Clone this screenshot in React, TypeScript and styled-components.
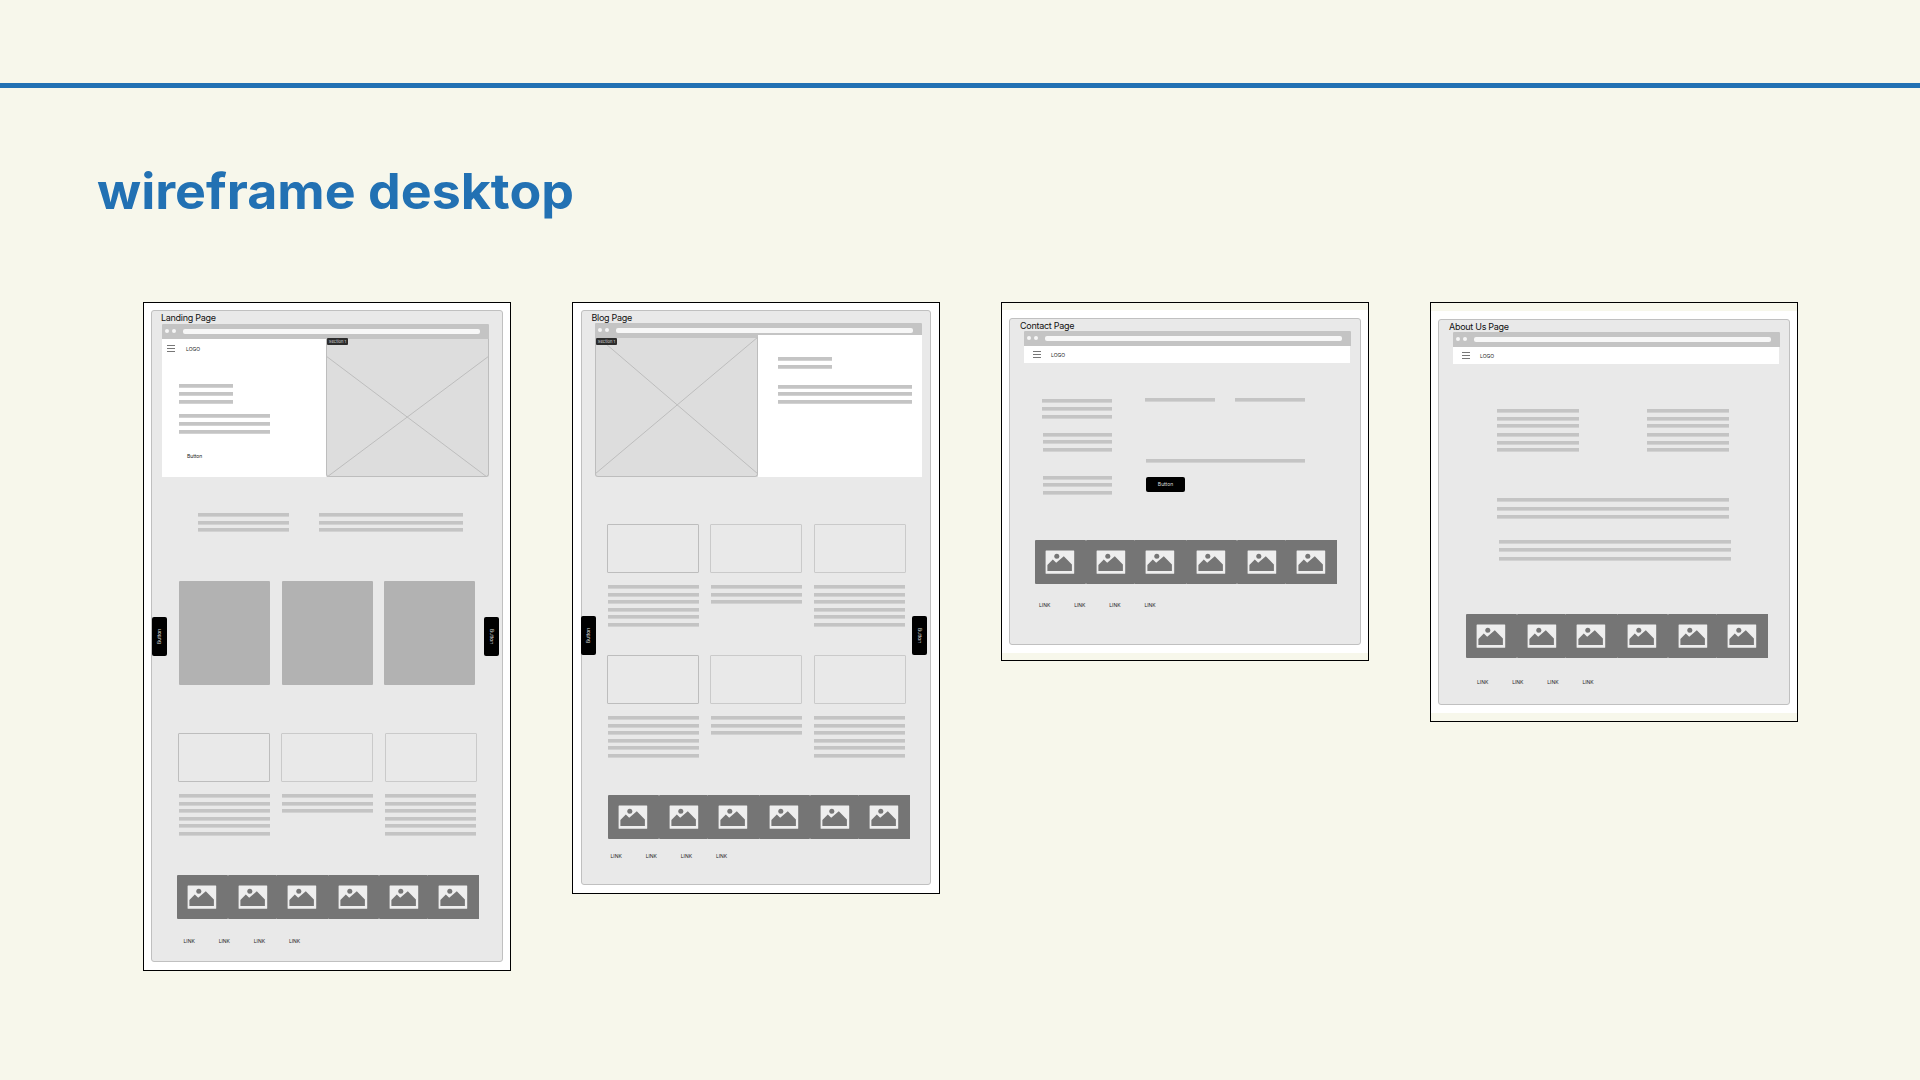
import React from "react";
import styled, { createGlobalStyle } from "styled-components";

const GlobalStyle = createGlobalStyle`
  * { box-sizing: border-box; }
  body { margin: 0; background: #f7f7eb; font-family: Inter, "Liberation Sans", sans-serif; }
`;

const Slide = styled.main`
  width: 1920px;
  height: 1080px;
  overflow: hidden;
  background: #f7f7eb;
`;

const TopRule = styled.div`
  height: 88px;
  border-bottom: 5px solid #2271b3;
`;

const Heading = styled.h1`
  margin: 73px 0 0 97px;
  width: max-content;
  height: 60px;
  font-size: 49px;
  line-height: 61px;
  font-weight: 700;
  color: #2271b3;
  white-space: nowrap;
  transform: scaleX(1.06);
  transform-origin: 0 50%;
`;

const Gallery = styled.section`
  display: flex;
  align-items: flex-start;
  gap: 61px;
  margin: 81px 0 0 143px;
`;

const Frame = styled.article<{ $h: number; $inset?: string }>`
  width: 368px;
  height: ${(p) => p.$h}px;
  border: 1px solid #000;
  padding: ${(p) => p.$inset ?? "0"};
`;

const Sheet = styled.div<{ $pad: string }>`
  height: 100%;
  background: #fff;
  padding: ${(p) => p.$pad};
`;

const Paper = styled.div`
  position: relative;
  height: 100%;
  background: #e9e9e9;
  border: 1px solid #c0c0c0;
  border-radius: 3px;
`;

const PageName = styled.div<{ $h: number; $x: number }>`
  height: ${(p) => p.$h}px;
  margin-left: ${(p) => p.$x}px;
  font-size: 9px;
  letter-spacing: -0.28px;
  line-height: 13px;
  color: #111;
  white-space: nowrap;
`;

const Chrome = styled.div<{ $x: number; $h?: number }>`
  display: flex;
  align-items: flex-start;
  width: 327px;
  height: ${(p) => p.$h ?? 15}px;
  margin-left: ${(p) => p.$x}px;
  padding: 5px 0 0 3px;
  background: #c4c4c4;
  border-radius: 1px 1px 0 0;
`;

const Dot = styled.i`
  width: 4px;
  height: 4px;
  margin-right: 3px;
  border-radius: 50%;
  background: #f6f6f6;
`;

const Address = styled.div`
  width: 297px;
  height: 5px;
  margin-left: 4px;
  border-radius: 2px;
  background: #f7f7f7;
`;

const Row = styled.div<{ $mt?: number; $x?: number; $gap?: number; $h?: number }>`
  display: flex;
  align-items: flex-start;
  gap: ${(p) => p.$gap ?? 0}px;
  margin: ${(p) => p.$mt ?? 0}px 0 0 ${(p) => p.$x ?? 0}px;
  height: ${(p) => (p.$h ? `${p.$h}px` : "auto")};
`;

const BarStack = styled.div<{ $w: number; $mt?: number; $x?: number; $gap?: number }>`
  display: flex;
  flex-direction: column;
  flex: none;
  gap: ${(p) => p.$gap ?? 3.6}px;
  width: ${(p) => p.$w}px;
  margin: ${(p) => p.$mt ?? 0}px 0 0 ${(p) => p.$x ?? 0}px;
`;

const Bar = styled.div`
  height: 4px;
  background: linear-gradient(#c4c4c4 75%, #d2d2d2 75%);
`;

const WhitePanel = styled.div<{ $w: number; $h: number }>`
  width: ${(p) => p.$w}px;
  height: ${(p) => p.$h}px;
  flex: none;
  background: #fff;
`;

const NavPanel = styled.div<{ $pad: string; $gap: number }>`
  display: flex;
  align-items: flex-start;
  gap: ${(p) => p.$gap}px;
  height: 14px;
  padding: ${(p) => p.$pad};
`;

const Burger = styled.div`
  display: flex;
  flex-direction: column;
  gap: 2px;
  width: 8px;
  > i { height: 1px; background: #777; }
`;

const Tiny = styled.span`
  font-size: 5px;
  line-height: 6px;
  color: #222;
  white-space: nowrap;
`;

const LogoText = styled(Tiny)`
  padding-top: 1px;
`;

const HeroButton = styled(Tiny)`
  display: block;
  margin: 19px 0 0 25px;
`;

const PhotoBox = styled.div<{ $w: number; $h: number }>`
  position: relative;
  flex: none;
  width: ${(p) => p.$w}px;
  height: ${(p) => p.$h}px;
  background: #ddd;
  border: 1px solid #bdbdbd;
  border-top: 0;
  border-radius: 0 0 3px 3px;
  > svg { position: absolute; left: -1px; top: 0; display: block; }
`;

const Badge = styled.span<{ $x: number; $y: number }>`
  position: absolute;
  left: ${(p) => p.$x}px;
  top: ${(p) => p.$y}px;
  width: 21px;
  height: 7px;
  border-radius: 1px;
  background: #2c2c2c;
  color: #d8d8d8;
  font-size: 4.1px;
  font-weight: 400;
  line-height: 7px;
  text-align: center;
  white-space: nowrap;
`;

const Square = styled.div`
  width: 91px;
  height: 104px;
  border-radius: 1px;
  background: #b2b2b2;
`;

const Outline = styled.div<{ $strong?: boolean }>`
  width: 92px;
  height: 49px;
  border: 1px solid ${(p) => (p.$strong ? "#bdbdbd" : "#cacaca")};
  border-radius: 1px;
`;

const SideButton = styled.button<{ $x: number; $y: number; $flip?: boolean }>`
  position: absolute;
  left: ${(p) => p.$x}px;
  top: ${(p) => p.$y}px;
  width: 15px;
  height: 39px;
  padding: 0;
  border: 0;
  border-radius: 2px;
  background: #000;
  color: #ddd;
  font: 5px/15px Inter, sans-serif;
  text-align: center;
  writing-mode: vertical-rl;
  transform: ${(p) => (p.$flip ? "rotate(180deg)" : "none")};
`;

const FlatButton = styled.button`
  display: block;
  width: 39px;
  height: 15px;
  margin: 14px 0 0 1px;
  padding: 0;
  border: 0;
  border-radius: 2px;
  background: #000;
  color: #ddd;
  font: 5px/15px Inter, sans-serif;
`;

const Strip = styled.div<{ $mt: number; $x: number }>`
  display: flex;
  width: 302px;
  height: 44px;
  margin: ${(p) => p.$mt}px 0 0 ${(p) => p.$x}px;
`;

const Tile = styled.div<{ $w: number; $join?: boolean }>`
  width: ${(p) => p.$w}px;
  height: 44px;
  padding: 10px 0 0 10px;
  background: #757575;
  border-radius: ${(p) => (p.$join ? "0" : "1px")};
  > svg { display: block; }
`;

const Links = styled.nav<{ $mt: number; $x: number }>`
  display: flex;
  margin: ${(p) => p.$mt}px 0 0 ${(p) => p.$x}px;
  > span { width: 35.15px; }
`;

const Column = styled.div<{ $w?: number }>`
  width: ${(p) => (p.$w ? `${p.$w}px` : "auto")};
  flex: none;
`;

function Bars({ n, ...rest }: { n: number; $w: number; $mt?: number; $x?: number; $gap?: number }) {
  return (
    <BarStack {...rest}>
      {Array.from({ length: n }, (_, i) => (
        <Bar key={i} />
      ))}
    </BarStack>
  );
}

function BrowserBar({ x, h }: { x: number; h?: number }) {
  return (
    <Chrome $x={x} $h={h}>
      <Dot />
      <Dot />
      <Address />
    </Chrome>
  );
}

function Nav({ pad, gap = 10 }: { pad: string; gap?: number }) {
  return (
    <NavPanel $pad={pad} $gap={gap}>
      <Burger>
        <i />
        <i />
        <i />
      </Burger>
      <LogoText>LOGO</LogoText>
    </NavPanel>
  );
}

function PictureStrip({ mt, x }: { mt: number; x: number }) {
  return (
    <Strip $mt={mt} $x={x}>
      {[51, 49, 51, 51, 49, 51].map((w, i) => (
        <Tile key={i} $w={w} $join={i === 2 || i === 5}>
          <svg width="30" height="25" viewBox="0 0 30 25">
            <rect x="0.6" y="0.5" width="28.6" height="23.3" rx="0.5" fill="#eee" />
            <circle cx="11.8" cy="6.3" r="2.5" fill="#757575" />
            <path d="M2.4 21V15l5.4-5.4 3.4 3.2 7.6-6.6 8.1 8.2V21z" fill="#757575" />
          </svg>
        </Tile>
      ))}
    </Strip>
  );
}

function FooterLinks({ mt, x }: { mt: number; x: number }) {
  return (
    <Links $mt={mt} $x={x}>
      {[0, 1, 2, 3].map((i) => (
        <Tiny key={i}>LINK</Tiny>
      ))}
    </Links>
  );
}

function Articles({ boxMt, boxX }: { boxMt: number; boxX: number }) {
  return (
    <>
      <Row $mt={boxMt} $x={boxX} $gap={11.4}>
        <Outline $strong />
        <Outline />
        <Outline />
      </Row>
      <Row $mt={12} $x={boxX + 1} $gap={12} $h={42}>
        <Bars n={6} $w={91} />
        <Bars n={3} $w={91} />
        <Bars n={6} $w={91} />
      </Row>
    </>
  );
}

function LandingPage() {
  return (
    <Frame $h={669}>
      <Sheet $pad="7px 7px 8px">
        <Paper>
          <PageName $h={13} $x={9}>Landing Page</PageName>
          <BrowserBar x={10} />
          <Row $x={10}>
            <WhitePanel $w={164} $h={138}>
              <Nav pad="6px 0 0 5px" gap={11} />
              <Bars n={3} $w={54} $x={17} $mt={31.4} />
              <Bars n={3} $w={91} $x={17} $mt={10.9} />
              <HeroButton>Button</HeroButton>
            </WhitePanel>
            <PhotoBox $w={163} $h={138}>
              <svg width="163" height="138">
                <path d="M0 17L161 138M163 17L1 138" stroke="#bdbdbd" fill="none" />
              </svg>
              <Badge $x={0} $y={-1}>Section 1</Badge>
            </PhotoBox>
          </Row>
          <Row $mt={36} $x={46} $gap={30}>
            <Bars n={3} $w={91} />
            <Bars n={3} $w={144} />
          </Row>
          <Row $mt={48.8} $x={27} $gap={11.7}>
            <Square />
            <Square />
            <Square />
          </Row>
          <Articles boxMt={48} boxX={26} />
          <PictureStrip mt={39.4} x={25} />
          <FooterLinks mt={18.6} x={31.5} />
          <SideButton $x={0} $y={306} $flip>Button</SideButton>
          <SideButton $x={332} $y={306}>Button</SideButton>
        </Paper>
      </Sheet>
    </Frame>
  );
}

function BlogPage() {
  return (
    <Frame $h={592}>
      <Sheet $pad="7px 8px 8px">
        <Paper>
          <PageName $h={12} $x={9.5}>Blog Page</PageName>
          <BrowserBar x={13} h={12} />
          <Row $x={13}>
            <PhotoBox $w={163} $h={142}>
              <svg width="163" height="142">
                <rect width="163" height="3" fill="#c4c4c4" />
                <path d="M4 3L163 139M0 139L163 2" stroke="#bdbdbd" fill="none" />
              </svg>
              <Badge $x={0} $y={3}>Section 1</Badge>
            </PhotoBox>
            <WhitePanel $w={164} $h={142}>
              <Bars n={2} $w={54} $x={20} $mt={22} $gap={4} />
              <Bars n={3} $w={134} $x={20} $mt={15.6} />
            </WhitePanel>
          </Row>
          <Articles boxMt={47} boxX={25} />
          <Articles boxMt={28} boxX={25} />
          <PictureStrip mt={37} x={26} />
          <FooterLinks mt={13.6} x={28.5} />
          <SideButton $x={-1} $y={305} $flip>Button</SideButton>
          <SideButton $x={330} $y={305}>Button</SideButton>
        </Paper>
      </Sheet>
    </Frame>
  );
}

function ContactPage() {
  return (
    <Frame $h={359} $inset="7px 0">
      <Sheet $pad="8px 7px">
        <Paper>
          <PageName $h={12} $x={10}>Contact Page</PageName>
          <BrowserBar x={14} />
          <Row $x={14}>
            <WhitePanel $w={326} $h={17}>
              <Nav pad="5px 0 0 9px" />
            </WhitePanel>
          </Row>
          <Row $mt={35} $x={32} $h={111}>
            <Column $w={103}>
              <Bars n={3} $w={70} $mt={1.4} />
              <Bars n={3} $w={69} $x={1} $mt={14} />
              <Bars n={3} $w={69} $x={1} $mt={24} />
            </Column>
            <Column>
              <Row $gap={20}>
                <Bars n={1} $w={70} />
                <Bars n={1} $w={70} />
              </Row>
              <Bars n={1} $w={159} $x={1} $mt={57} />
              <FlatButton>Button</FlatButton>
            </Column>
          </Row>
          <PictureStrip mt={31} x={25} />
          <FooterLinks mt={18} x={29} />
        </Paper>
      </Sheet>
    </Frame>
  );
}

function AboutPage() {
  return (
    <Frame $h={420} $inset="8px 0">
      <Sheet $pad="8px 7px">
        <Paper>
          <PageName $h={12} $x={10}>About Us Page</PageName>
          <BrowserBar x={14} />
          <Row $x={14}>
            <WhitePanel $w={326} $h={17}>
              <Nav pad="5px 0 0 9px" />
            </WhitePanel>
          </Row>
          <Row $mt={45} $x={58} $gap={68} $h={43}>
            <Column>
              <Bars n={3} $w={82} />
              <Bars n={3} $w={82} $mt={5} />
            </Column>
            <Column>
              <Bars n={3} $w={82} />
              <Bars n={3} $w={82} $mt={5} />
            </Column>
          </Row>
          <Bars n={3} $w={232} $x={58} $mt={46} $gap={4.7} />
          <Bars n={3} $w={232} $x={60} $mt={20.2} $gap={4.7} />
          <PictureStrip mt={53.4} x={27} />
          <FooterLinks mt={20.6} x={38} />
        </Paper>
      </Sheet>
    </Frame>
  );
}

export default function App() {
  return (
    <>
      <GlobalStyle />
      <Slide>
        <TopRule />
        <Heading>wireframe desktop</Heading>
        <Gallery>
          <LandingPage />
          <BlogPage />
          <ContactPage />
          <AboutPage />
        </Gallery>
      </Slide>
    </>
  );
}
